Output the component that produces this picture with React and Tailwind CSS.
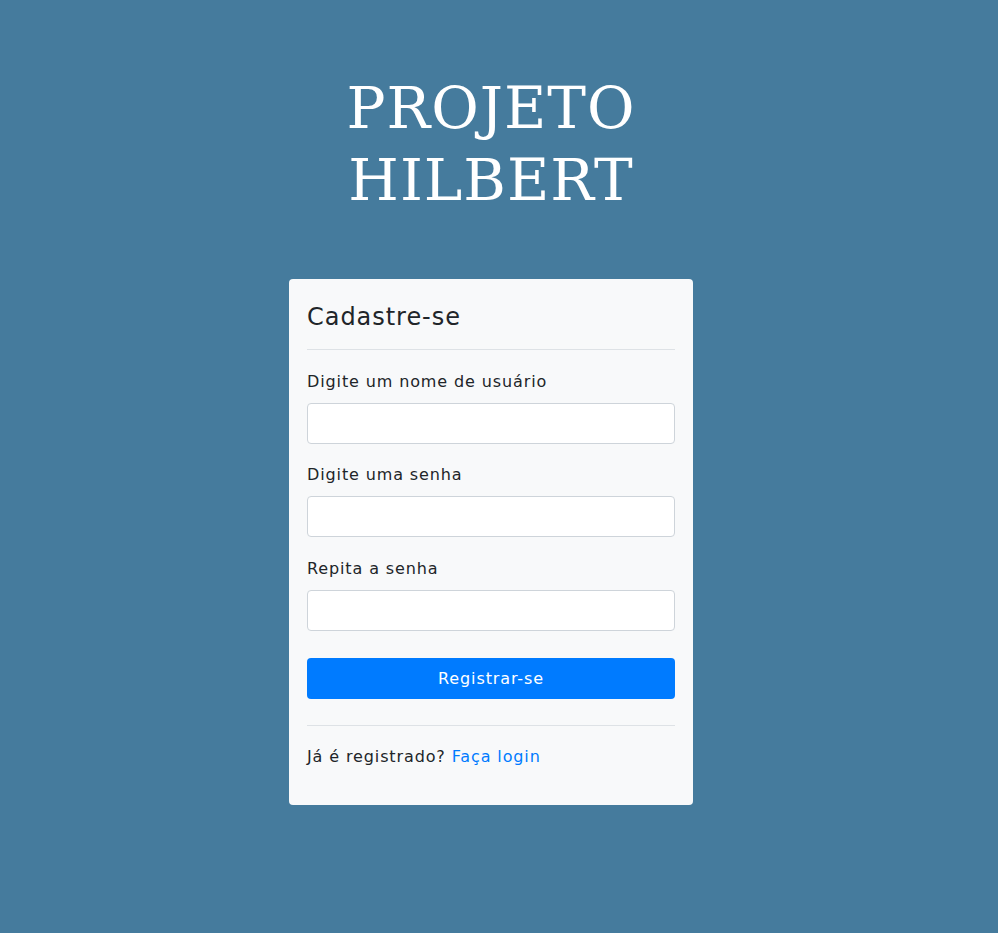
import React from 'react';

const App = () => {
  return (
    <div className="min-h-screen w-full bg-[#457b9d] flex flex-col items-center pr-[16px] font-['DejaVu_Sans',sans-serif] tracking-[0.055em]">
      <h1 className="mt-[72px] text-center text-white font-['DejaVu_Serif',serif] font-normal text-[58px] leading-[72px] tracking-[1px]">
        PROJETO
        <br />
        HILBERT
      </h1>

      <div className="mt-[63px] w-[404px] bg-[#f8f9fa] rounded-[4px] px-[18px] pt-[21px] pb-[36px] text-[#212529]">
        <h2 className="text-[24px] leading-[34px] font-normal tracking-[0.04em]">Cadastre-se</h2>
        <hr className="mt-[15px] border-t border-[#dee2e6]" />

        <form className="mt-[20px] flex flex-col">
          <label className="text-[16px] leading-[24px]">Digite um nome de usuário</label>
          <input type="text" className="mt-[9px] h-[41px] w-full bg-white border border-[#ced4da] rounded-[4px] px-3" />

          <label className="mt-[19px] text-[16px] leading-[24px]">Digite uma senha</label>
          <input type="password" className="mt-[9px] h-[41px] w-full bg-white border border-[#ced4da] rounded-[4px] px-3" />

          <label className="mt-[20px] text-[16px] leading-[24px]">Repita a senha</label>
          <input type="password" className="mt-[9px] h-[41px] w-full bg-white border border-[#ced4da] rounded-[4px] px-3" />

          <button type="button" className="mt-[27px] h-[41px] w-full bg-[#007bff] text-white text-[16px] rounded-[4px]">
            Registrar-se
          </button>
        </form>

        <hr className="mt-[26px] border-t border-[#dee2e6]" />
        <p className="mt-[19px] text-[16px] leading-[24px]">
          Já é registrado? <a href="#" className="text-[#007bff]">Faça login</a>
        </p>
      </div>
    </div>
  );
};

export default App;
